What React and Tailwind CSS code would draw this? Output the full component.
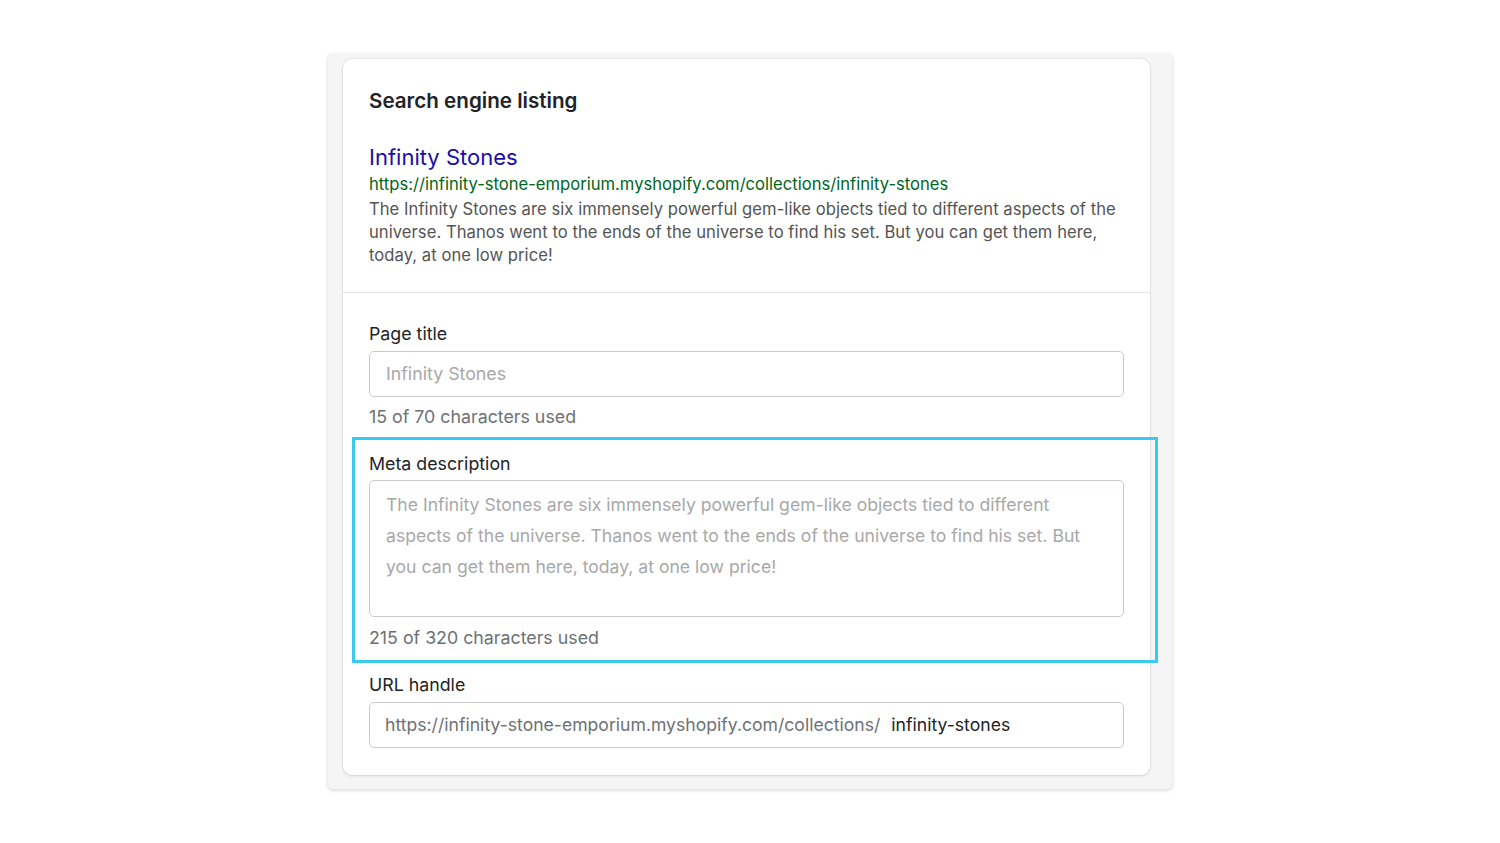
import React from "react";

const font = { fontFamily: 'Inter, "Noto Sans", "Liberation Sans", sans-serif' };

export default function App() {
  return (
    <div className="w-[1500px] h-[843px] bg-white relative" style={font}>
      <div className="absolute left-[328px] top-[54px] w-[844px] h-[735px] bg-[#f5f5f5] rounded-[5px] shadow-[0_1px_4px_rgba(0,0,0,0.18)] pl-[15px] pt-[5px]">
        <div className="w-[807px] bg-white rounded-[9px] shadow-[0_0_0_1px_rgba(63,63,68,0.05),0_1px_3px_rgba(63,63,68,0.15)]">
          <div className="px-[26px] pt-[28px] pb-[25px] border-b border-[#e3e3e3]">
            <h2 className="text-[20.6px] leading-[28px] font-semibold text-[#212326]">Search engine listing</h2>
            <div className="mt-[28px] text-[22px] leading-[28px] text-[#1a0dab]">Infinity Stones</div>
            <div className="mt-[2px] text-[16.6px] leading-[23px] text-[#006621]">https://infinity-stone-emporium.myshopify.com/collections/infinity-stones</div>
            <p className="text-[16.6px] leading-[23px] text-[#545454] mt-[2px] tracking-[0.05px]">
              The Infinity Stones are six immensely powerful gem-like objects tied to different aspects of the universe. Thanos went to the ends of the universe to find his set. But you can get them here, today, at one low price!
            </p>
          </div>
          <div className="px-[26px] pt-[29px] pb-[27px]">
            <label className="block text-[17.8px] leading-[24px] text-[#212326]">Page title</label>
            <div className="mt-[5px] h-[46px] border border-[#c9cccf] rounded-[5px] flex items-center px-[16px] text-[17.8px] text-[#a8a8a8]">Infinity Stones</div>
            <div className="mt-[8px] text-[17.8px] leading-[24px] text-[#6d7175]">15 of 70 characters used</div>

            <div className="relative mt-[23px]">
              <div className="absolute left-[-17px] right-[-34px] top-[-15px] bottom-[-13px] border-[3px] border-[#3cc9f0] pointer-events-none"></div>
              <label className="block text-[17.8px] leading-[24px] text-[#212326]">Meta description</label>
              <div className="mt-[4px] h-[137px] border border-[#c9cccf] rounded-[5px] px-[16px] pt-[8px] text-[17.6px] leading-[31px] text-[#a8a8a8]">
                The Infinity Stones are six immensely powerful gem-like objects tied to different aspects of the universe. Thanos went to the ends of the universe to find his set. But you can get them here, today, at one low price!
              </div>
              <div className="mt-[9px] text-[17.8px] leading-[24px] text-[#6d7175]">215 of 320 characters used</div>
            </div>

            <label className="block mt-[23px] text-[17.8px] leading-[24px] text-[#212326]">URL handle</label>
            <div className="mt-[5px] h-[46px] border border-[#c9cccf] rounded-[5px] flex items-center px-[15px] text-[17.6px]">
              <span className="text-[#6d7175]">https://infinity-stone-emporium.myshopify.com/collections/</span>
              <span className="ml-[11px] text-[#212326]">infinity-stones</span>
            </div>
          </div>
        </div>
      </div>
    </div>
  );
}
